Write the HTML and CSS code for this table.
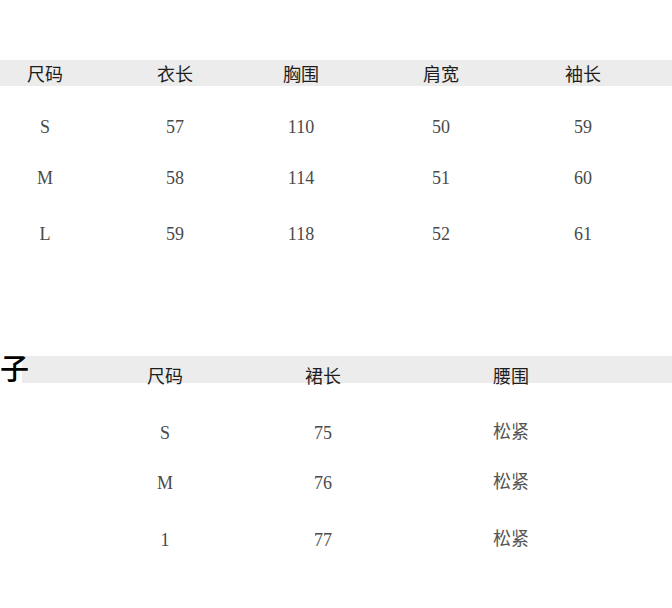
FILE: index.html
```html
<!DOCTYPE html>
<html lang="zh">
<head>
<meta charset="utf-8">
<link rel="stylesheet" href="styles.css">
</head>
<body>
<section class="sec1">
  <div class="t1 head">
    <div>尺码</div><div>衣长</div><div>胸围</div><div>肩宽</div><div>袖长</div>
  </div>
  <div class="t1 row r1">
    <div>S</div><div>57</div><div>110</div><div>50</div><div>59</div>
  </div>
  <div class="t1 row r2">
    <div>M</div><div>58</div><div>114</div><div>51</div><div>60</div>
  </div>
  <div class="t1 row r3">
    <div>L</div><div>59</div><div>118</div><div>52</div><div>61</div>
  </div>
</section>
<section class="sec2">
  <div class="titlerow">
    <h2 class="title">子</h2>
    <div class="t2 head">
      <div>尺码</div><div>裙长</div><div>腰围</div>
    </div>
  </div>
  <div class="body2">
    <div class="t2 row q1">
      <div>S</div><div>75</div><div class="cjk">松紧</div>
    </div>
    <div class="t2 row q2">
      <div>M</div><div>76</div><div class="cjk">松紧</div>
    </div>
    <div class="t2 row q3">
      <div>1</div><div>77</div><div class="cjk">松紧</div>
    </div>
  </div>
</section>
</body>
</html>
```
FILE: styles.css
```css
html, body {
  margin: 0;
  padding: 0;
  background: #ffffff;
}
body {
  width: 672px;
  height: 608px;
  overflow: hidden;
  font-family: "Noto Sans CJK SC", "Noto Sans", sans-serif;
}
.sec1 {
  padding-top: 60px;
}
.t1 {
  display: grid;
  grid-template-columns: 90px 110px 82px 138px 86px;
  column-gap: 30px;
  text-align: center;
}
.t2 {
  display: grid;
  grid-template-columns: 120px 120px 180px;
  column-gap: 38px;
  padding-left: 83px;
  text-align: center;
}
.head {
  background: #ececec;
  color: #1e1e1e;
  font-size: 18px;
  height: 26px;
  line-height: 27px;
}
.row {
  align-items: center;
  font-family: "Liberation Serif", "Times New Roman", serif;
  font-size: 18px;
  color: #4a4a4a;
}
.r1 { margin-top: 15px; height: 52px; }
.r2 { height: 50px; }
.r3 { height: 62px; }
.sec2 {
  margin-top: 87px;
}
.titlerow {
  display: flex;
  align-items: flex-end;
}
.title {
  position: relative;
  z-index: 1;
  margin: 0;
  width: 22px;
  font-size: 29px;
  line-height: 31px;
  font-weight: 500;
  color: #000;
  white-space: nowrap;
}
.titlerow .t2 {
  flex: 1;
  height: 27px;
  line-height: 39px;
  overflow: visible;
}
.body2 {
  padding-left: 22px;
}
.q1 { margin-top: 25px; height: 50px; }
.q2 { height: 50px; }
.q3 { height: 64px; }
.cjk {
  font-family: "Noto Sans CJK SC", sans-serif;
  font-size: 18px;
  color: #555;
  position: relative;
  top: -3px;
}
```
